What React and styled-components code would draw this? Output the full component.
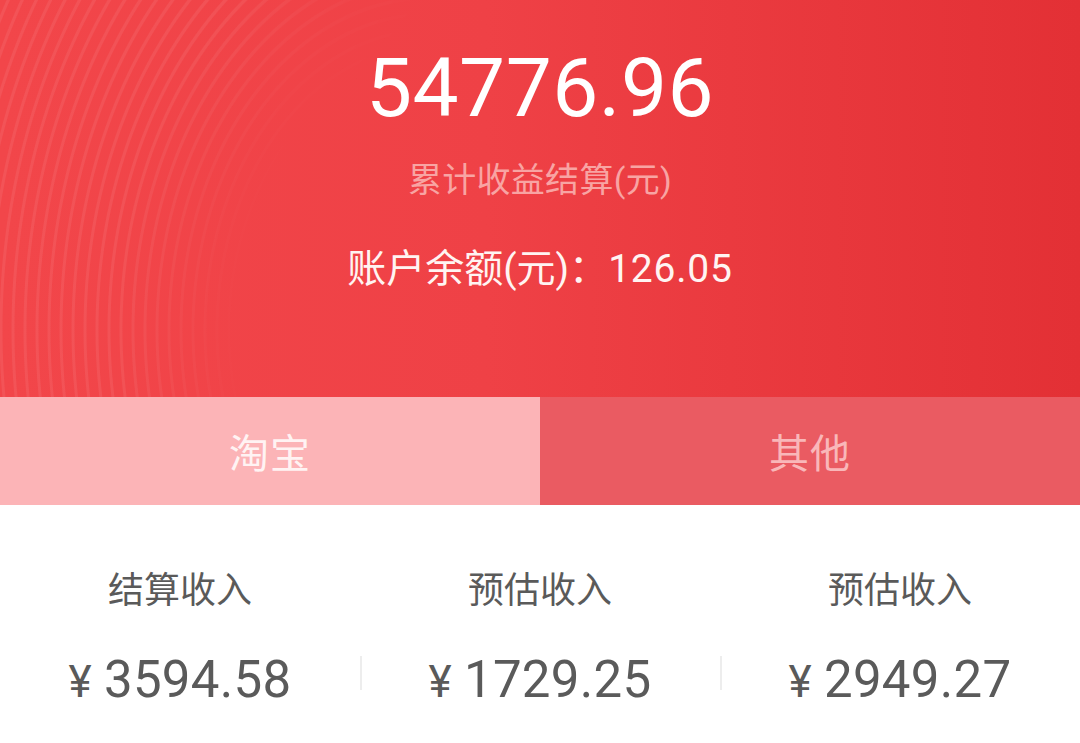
import React from 'react';
import styled, { createGlobalStyle } from 'styled-components';

const tabs = [
  { key: 'taobao', label: '淘宝', active: true },
  { key: 'other', label: '其他', active: false },
];

const stats = [
  { label: '结算收入', value: '3594.58' },
  { label: '预估收入', value: '1729.25' },
  { label: '预估收入', value: '2949.27' },
];

const App = () => {
  return (
    <>
      <GlobalStyle />
      <Page>
        <Header>
          <Total>54776.96</Total>
          <TotalLabel>累计收益结算(元)</TotalLabel>
          <Balance>
            账户余额(元)：<BalanceNum>126.05</BalanceNum>
          </Balance>
        </Header>
        <Tabs>
          {tabs.map((t) => (
            <Tab key={t.key} $active={t.active}>
              {t.label}
            </Tab>
          ))}
        </Tabs>
        <Stats>
          {stats.map((s, i) => (
            <Stat key={i} $divider={i > 0}>
              <StatLabel>{s.label}</StatLabel>
              <StatValue>
                <Yen>¥</Yen>
                {s.value}
              </StatValue>
            </Stat>
          ))}
        </Stats>
      </Page>
    </>
  );
};

// SCC ========== VARIABLES ========== //
const cjk = `Roboto, "Noto Sans CJK SC", sans-serif`;
const clr_text = '#5a5a5a';
const waveCenter = '430px 330px';

// SCC ========== STYLED COMPONENTS ========== //
const GlobalStyle = createGlobalStyle`
  html, body {
    margin: 0;
    padding: 0;
    background: #ffffff;
  }
  * { box-sizing: border-box; }
`;

const Page = styled.div`
  width: 1080px;
  height: 743px;
  overflow: hidden;
  background: #ffffff;
  font-family: ${cjk};
`;

const Header = styled.section`
  position: relative;
  height: 397px;
  padding-top: 40px;
  display: flex;
  flex-direction: column;
  align-items: center;
  background: linear-gradient(90deg, #f2464a 0%, #ef4146 45%, #e33035 100%);
  overflow: hidden;

  &::before {
    content: '';
    position: absolute;
    left: 0;
    top: 0;
    width: 600px;
    height: 100%;
    background: repeating-radial-gradient(
      ellipse 420px 560px at ${waveCenter},
      rgba(255, 255, 255, 0) 0 7px,
      rgba(255, 255, 255, 0.075) 8px 10px,
      rgba(255, 255, 255, 0) 11px 12px
    );
    -webkit-mask-image: radial-gradient(ellipse 420px 560px at ${waveCenter}, transparent 45%, #000 75%),
      linear-gradient(90deg, #000 0%, #000 40%, transparent 75%);
    -webkit-mask-composite: source-in;
    mask-image: radial-gradient(ellipse 420px 560px at ${waveCenter}, transparent 45%, #000 75%),
      linear-gradient(90deg, #000 0%, #000 40%, transparent 75%);
    mask-composite: intersect;
    pointer-events: none;
  }
`;

const Total = styled.div`
  position: relative;
  color: #ffffff;
  font-size: 82px;
  font-weight: 400;
  line-height: 96px;
  letter-spacing: 0.5px;
`;

const TotalLabel = styled.div`
  position: relative;
  margin-top: 22px;
  color: #f8a4a3;
  font-size: 34px;
  line-height: 44px;
  letter-spacing: 0.3px;
`;

const Balance = styled.div`
  position: relative;
  margin-top: 42px;
  color: #fff4f2;
  font-size: 39px;
  line-height: 50px;
`;

const BalanceNum = styled.span`
  letter-spacing: 0.8px;
`;

const Tabs = styled.nav`
  display: flex;
  height: 108px;
`;

const Tab = styled.div`
  flex: 1;
  display: flex;
  align-items: center;
  justify-content: center;
  background: ${(p) => (p.$active ? '#fcb4b7' : '#ea5b62')};
  color: ${(p) => (p.$active ? '#fff3f3' : '#f9b7b9')};
  font-size: 40px;
  letter-spacing: 1px;
`;

const Stats = styled.section`
  display: grid;
  grid-template-columns: repeat(3, 1fr);
  padding-top: 62px;
`;

const Stat = styled.div`
  position: relative;
  display: flex;
  flex-direction: column;
  align-items: center;

  &::before {
    content: '';
    display: ${(p) => (p.$divider ? 'block' : 'none')};
    position: absolute;
    left: 0;
    top: 89px;
    width: 2px;
    height: 34px;
    background: #ededed;
  }
`;

const StatLabel = styled.div`
  color: ${clr_text};
  font-size: 36px;
  line-height: 48px;
`;

const StatValue = styled.div`
  margin-top: 35px;
  color: ${clr_text};
  font-size: 51px;
  line-height: 60px;
  letter-spacing: 0.3px;
`;

const Yen = styled.span`
  margin-right: 12px;
  font-size: 44px;
`;

export default App;
